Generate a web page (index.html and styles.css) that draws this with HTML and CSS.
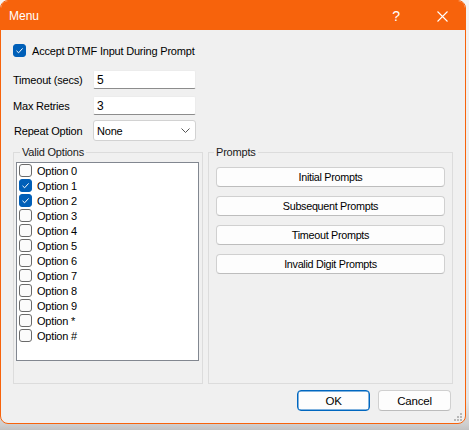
FILE: index.html
```html
<!DOCTYPE html>
<html>
<head>
<meta charset="utf-8">
<link rel="stylesheet" href="styles.css">
</head>
<body>
<div class="window">
  <div class="titlebar">
    <span class="title">Menu</span>
    <span class="help">?</span>
    <svg class="close" width="11" height="11" viewBox="0 0 11 11"><path d="M0.5 0.5 L10.5 10.5 M10.5 0.5 L0.5 10.5" stroke="#fff" stroke-width="1.1" fill="none"/></svg>
  </div>
  <div class="content">
    <div class="check-row">
      <span class="cb checked"><svg width="13" height="13" viewBox="0 0 13 13"><path d="M3.5 6.8 L5.6 8.8 L9.6 4.4" stroke="#fff" stroke-width="1" fill="none"/></svg></span>
      <span class="lbl">Accept DTMF Input During Prompt</span>
    </div>
    <div class="form-row r1">
      <span class="flabel">Timeout (secs)</span>
      <div class="input">5</div>
    </div>
    <div class="form-row r2">
      <span class="flabel">Max Retries</span>
      <div class="input">3</div>
    </div>
    <div class="form-row r3">
      <span class="flabel shift">Repeat Option</span>
      <div class="select"><span>None</span>
        <svg width="9" height="5" viewBox="0 0 9 5"><path d="M0.5 0.5 L4.5 4.5 L8.5 0.5" stroke="#555" stroke-width="1" fill="none"/></svg>
      </div>
    </div>
    <div class="groups">
      <fieldset class="group valid">
        <legend>Valid Options</legend>
        <div class="listbox">
          <div class="item"><span class="cb"></span><span>Option 0</span></div>
          <div class="item"><span class="cb checked"><svg width="13" height="13" viewBox="0 0 13 13"><path d="M3.5 6.8 L5.6 8.8 L9.6 4.4" stroke="#fff" stroke-width="1" fill="none"/></svg></span><span>Option 1</span></div>
          <div class="item"><span class="cb checked"><svg width="13" height="13" viewBox="0 0 13 13"><path d="M3.5 6.8 L5.6 8.8 L9.6 4.4" stroke="#fff" stroke-width="1" fill="none"/></svg></span><span>Option 2</span></div>
          <div class="item"><span class="cb"></span><span>Option 3</span></div>
          <div class="item"><span class="cb"></span><span>Option 4</span></div>
          <div class="item"><span class="cb"></span><span>Option 5</span></div>
          <div class="item"><span class="cb"></span><span>Option 6</span></div>
          <div class="item"><span class="cb"></span><span>Option 7</span></div>
          <div class="item"><span class="cb"></span><span>Option 8</span></div>
          <div class="item"><span class="cb"></span><span>Option 9</span></div>
          <div class="item"><span class="cb"></span><span>Option *</span></div>
          <div class="item"><span class="cb"></span><span>Option #</span></div>
        </div>
      </fieldset>
      <fieldset class="group prompts">
        <legend>Prompts</legend>
        <div class="btn">Initial Prompts</div>
        <div class="btn">Subsequent Prompts</div>
        <div class="btn">Timeout Prompts</div>
        <div class="btn">Invalid Digit Prompts</div>
      </fieldset>
    </div>
    <div class="actions">
      <div class="dbtn ok">OK</div>
      <div class="dbtn">Cancel</div>
    </div>
  </div>
  <svg class="grip" width="9" height="9" viewBox="0 0 9 9">
    <g fill="#b8b8b8">
      <rect x="7" y="1" width="2" height="2"/>
      <rect x="4" y="4" width="2" height="2"/><rect x="7" y="4" width="2" height="2"/>
      <rect x="1" y="7" width="2" height="2"/><rect x="4" y="7" width="2" height="2"/><rect x="7" y="7" width="2" height="2"/>
    </g>
  </svg>
</div>
</body>
</html>
```
FILE: styles.css
```css
html, body {
  margin: 0;
  padding: 0;
}
body {
  width: 469px;
  height: 430px;
  background: linear-gradient(to bottom, #f4f4f4 0px, #e6e6e6 400px, #cfcfcf 424px, #c2c2c2 430px);
  font-family: "Liberation Sans", Arial, sans-serif;
  font-size: 11px;
  letter-spacing: -0.2px;
  color: #000;
  overflow: hidden;
}
.window {
  position: relative;
  box-sizing: border-box;
  width: 466px;
  height: 424px;
  border: 1px solid #f7630c;
  border-radius: 8px;
  background: #f0f0f0;
  overflow: hidden;
}
.titlebar {
  height: 29px;
  background: #f7630c;
  display: flex;
  align-items: center;
  color: #fff;
  letter-spacing: 0;
}
.title {
  font-size: 12px;
  margin-left: 8px;
  margin-top: 1px;
  flex: 1;
}
.help {
  font-size: 14px;
  margin-right: 37px;
  margin-top: 1px;
}
.close {
  margin-right: 17px;
  margin-top: 1px;
}
.content {
  padding: 13px 12px 0 12px;
}
.check-row {
  display: flex;
  align-items: center;
  height: 15px;
}
.check-row .lbl {
  margin-left: 6px;
  font-size: 11px;
}
.cb {
  box-sizing: border-box;
  width: 13px;
  height: 13px;
  border: 1px solid #6a6a6a;
  border-radius: 3px;
  background: #fbfbfb;
  display: inline-block;
  flex: none;
}
.cb.checked {
  background: #005fb8;
  border-color: #005fb8;
  position: relative;
}
.cb.checked svg {
  display: block;
  margin: -1px;
}
.form-row {
  display: flex;
  align-items: center;
}
.r1 { margin-top: 12px; height: 19px; }
.r2 { margin-top: 7px; height: 19px; }
.r3 { margin-top: 5px; height: 21px; }
.flabel {
  width: 80px;
  flex: none;
}
.flabel.shift {
  padding-left: 1px;
  width: 79px;
}
.input {
  box-sizing: border-box;
  width: 103px;
  height: 100%;
  background: #fff;
  border: 1px solid #ececec;
  border-bottom-color: #8c8c8c;
  border-radius: 2px;
  padding-left: 3px;
  display: flex;
  align-items: center;
  font-size: 12px;
}
.select {
  box-sizing: border-box;
  width: 103px;
  height: 100%;
  background: #fff;
  border: 1px solid #d2d2d2;
  border-radius: 3px;
  padding: 0 5px 0 3px;
  display: flex;
  align-items: center;
  justify-content: space-between;
}
.select svg { display: block; }
.groups {
  display: flex;
  gap: 5px;
  margin-top: 4px;
}
.group {
  margin: 0;
  border: 1px solid #dcdcdc;
  min-width: 0;
  box-sizing: border-box;
}
.group legend {
  line-height: 15px;
  padding: 0 2px;
  color: #1a1a1a;
}
.valid {
  width: 190px;
  padding: 2px 3px 22px 2px;
}
.valid legend { margin-left: 4px; }
.prompts {
  width: 245px;
  padding: 7px 7px 0 7px;
  display: flex;
  flex-direction: column;
  gap: 9px;
}
.prompts legend { margin-left: -2px; }
.listbox {
  box-sizing: border-box;
  height: 199px;
  background: #fff;
  border: 1px solid #828790;
  padding: 0 2px;
}
.item {
  display: flex;
  align-items: center;
  height: 15px;
  gap: 5px;
}
.btn {
  box-sizing: border-box;
  height: 20px;
  background: #fdfdfd;
  border: 1px solid #d0d0d0;
  border-bottom-color: #bdbdbd;
  border-radius: 4px;
  display: flex;
  align-items: center;
  justify-content: center;
  font-size: 10.8px;
  letter-spacing: -0.3px;
}
.actions {
  display: flex;
  justify-content: flex-end;
  gap: 8px;
  margin-top: 6px;
  margin-right: 2px;
}
.dbtn {
  box-sizing: border-box;
  width: 73px;
  height: 21px;
  background: #fdfdfd;
  border: 1px solid #d0d0d0;
  border-bottom-color: #bcbcbc;
  border-radius: 4px;
  display: flex;
  align-items: center;
  justify-content: center;
  font-size: 11.5px;
}
.dbtn.ok {
  border: 1px solid #0067c0;
  box-shadow: inset 0 0 0 0.5px #0067c0;
}
.grip {
  position: absolute;
  right: 3px;
  bottom: 2px;
}
```
